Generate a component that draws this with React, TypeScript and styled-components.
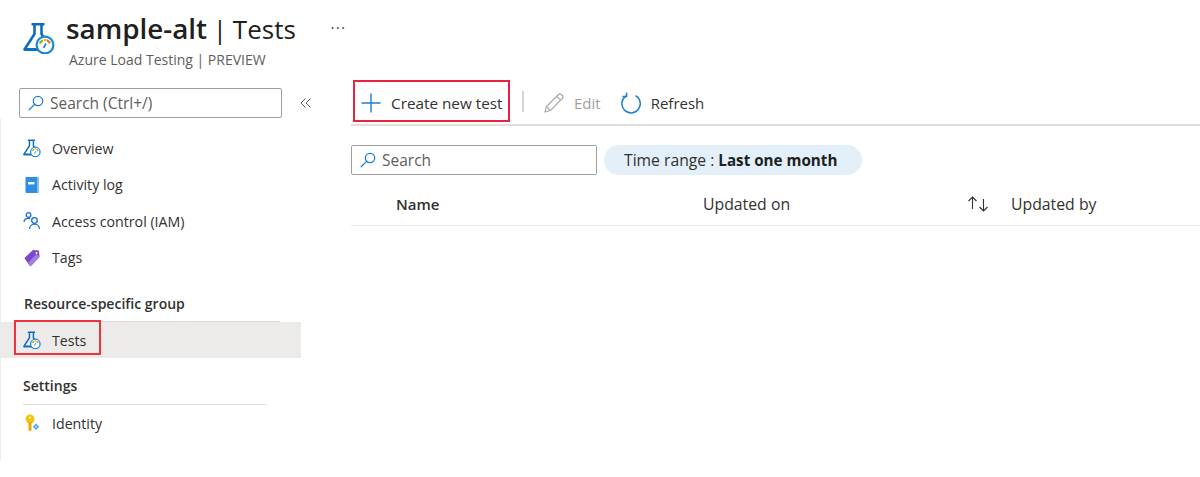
import React from 'react'
import styled, { createGlobalStyle } from 'styled-components'

const GlobalStyle = createGlobalStyle`
  html, body {
    margin: 0;
    padding: 0;
    background: #fff;
  }
  body {
    font-family: "Open Sans", "Noto Sans", "Liberation Sans", sans-serif;
    color: #323130;
  }
`

const Page = styled.div`
  width: 1200px;
  height: 477px;
  overflow: hidden;
  display: flex;
  flex-direction: column;
`
const Header = styled.header`
  display: flex;
  align-items: flex-start;
  padding: 12px 0 0 23px;
  height: 76px;
  box-sizing: border-box;
  > svg {
    margin-top: 10px;
  }
`
const HeaderText = styled.div`
  margin-left: 11px;
  display: flex;
  flex-direction: column;
`
const TitleRow = styled.div`
  display: flex;
  align-items: flex-start;
`
const Title = styled.h1`
  margin: -1px 0 0;
  font-size: 26px;
  line-height: 34px;
  font-weight: 400;
  color: #201f1e;
  white-space: nowrap;
  word-spacing: -1px;
  b {
    font-size: 27.8px;
    font-weight: 600;
  }
`
const More = styled.span`
  margin-left: 35px;
  font-size: 14px;
  line-height: 32px;
  letter-spacing: 1.5px;
`
const Subtitle = styled.div`
  margin: 5px 0 0 3px;
  font-size: 14px;
  line-height: 18px;
  color: #605e5c;
`
const Body = styled.div`
  display: flex;
  flex: 1;
  min-height: 0;
`
const Sidebar = styled.aside`
  width: 301px;
  flex: none;
  height: 373px;
`
const SideSearchRow = styled.div`
  display: flex;
  align-items: center;
  padding: 12px 0 0 19px;
  height: 30px;
`
const Collapse = styled.span`
  margin-left: 18px;
  width: 12px;
  display: flex;
`
const SearchBox = styled.div<{ width: number }>`
  width: ${({ width }) => width}px;
  height: 30px;
  box-sizing: border-box;
  flex: none;
  border: 1px solid #a19f9d;
  border-radius: 2px;
  display: flex;
  align-items: center;
  gap: 6px;
  padding-left: 8px;
  font-size: 15.5px;
  color: #605e5c;
`
const SideNav = styled.nav`
  margin-top: 1px;
  border-left: 1px solid #edebe9;
  height: 341px;
  display: flex;
  flex-direction: column;
`
const NavList = styled.div`
  padding-top: 11px;
  display: flex;
  flex-direction: column;
`
const NavItem = styled.div<{ active?: boolean }>`
  height: ${({ active }) => (active ? 36 : 36.5)}px;
  display: flex;
  align-items: center;
  gap: 11px;
  padding-left: 22px;
  font-size: 14.2px;
  background: ${({ active }) => (active ? '#edebe9' : 'transparent')};
  position: relative;
`
const IconSlot = styled.span`
  width: 18px;
  height: 18px;
  flex: none;
  display: flex;
`
const Highlight = styled.span`
  position: absolute;
  left: 13px;
  top: -2px;
  width: 87px;
  height: 35px;
  border: 2px solid #f0343f;
  box-sizing: border-box;
`
const GroupTitle = styled.div<{ rule: number }>`
  margin: 18px 0 0 ${({ rule }) => (rule === 243 ? '22px' : '23px')};
  width: ${({ rule }) => rule}px;
  height: ${({ rule }) => (rule === 243 ? '28px' : '27px')};
  line-height: 20px;
  font-size: 14px;
  font-weight: 600;
  color: #323130;
  border-bottom: 1px solid #dcdbd9;
`
const Main = styled.main`
  flex: 1;
  margin-left: 50px;
  min-width: 0;
  display: flex;
  flex-direction: column;
`
const Toolbar = styled.div`
  height: 46px;
  margin-top: 4px;
  box-sizing: border-box;
  border-bottom: 2px solid #e1dfdd;
  display: flex;
  align-items: flex-start;
  padding-left: 2px;
`
const ToolButton = styled.div<{ disabled?: boolean }>`
  display: flex;
  align-items: center;
  gap: 10px;
  height: 42px;
  box-sizing: border-box;
  padding-top: 3px;
  font-size: 15px;
  color: ${({ disabled }) => (disabled ? '#a19f9d' : '#323130')};
  padding-left: 20px;
`
const PrimaryButton = styled(ToolButton)`
  width: 157px;
  padding-left: 6px;
  padding-top: 3px;
  font-size: 15.3px;
  border: 2px solid #e8233f;
  white-space: nowrap;
`
const ToolDivider = styled.span`
  width: 2px;
  height: 21px;
  margin: 11px 0 0 12px;
  background: #d6d5d3;
`
const FilterRow = styled.div`
  display: flex;
  gap: 7px;
  margin-top: 19px;
`
const Pill = styled.div`
  width: 258px;
  height: 30px;
  box-sizing: border-box;
  border-radius: 15px;
  background: #e3f0fa;
  display: flex;
  align-items: center;
  padding-left: 20px;
  font-size: 15.7px;
  white-space: pre;
  b {
    font-size: 15.2px;
    font-weight: 700;
    color: #201f1e;
  }
`
const TableHead = styled.div`
  display: grid;
  grid-template-columns: 307px 264px 44px 1fr;
  align-items: center;
  height: 51px;
  box-sizing: border-box;
  padding: 7px 0 0 45px;
  border-bottom: 1px solid #edebe9;
  font-size: 15.8px;
`
const Column = styled.span<{ strong?: boolean }>`
  font-weight: ${({ strong }) => (strong ? 600 : 400)};
  font-size: ${({ strong }) => (strong ? '15px' : 'inherit')};
`
const SortIcon = styled.span`
  display: flex;
`

const Flask = ({ size }: { size: number }) => (
  <svg width={size} height={size} viewBox="0 0 32 32">
    <rect x="8.500" y="1" width="13" height="2.600" rx="0.600" fill="#0f6cbd" />
    <path d="M11.500 3v9L1.500 27.500h15M18.500 3v9l3 5" fill="none" stroke="#0f6cbd" strokeWidth="2.600" strokeLinejoin="round" />
    <path d="M1.500 27.500h15" stroke="#0f6cbd" strokeWidth="2.800" />
    <circle cx="22" cy="23" r="8.400" fill="#fff" stroke="#1a86d8" strokeWidth="2.200" />
    <path d="M16.800 21.500a5.600 5.600 0 0 1 3-3.100" fill="none" stroke="#7fba00" strokeWidth="2.200" />
    <path d="M20.800 18a5.600 5.600 0 0 1 2.600 0" fill="none" stroke="#f2b90f" strokeWidth="2.200" />
    <path d="M23.800 18.200a5.600 5.600 0 0 1 3.200 3.200" fill="none" stroke="#e8702a" strokeWidth="2.200" />
    <path d="M20.500 26l2.500-4.500" stroke="#1a86d8" strokeWidth="1.600" />
  </svg>
)

const Magnifier = () => (
  <svg width="16" height="16" viewBox="0 0 16 16" fill="none" stroke="#1f7fd1" strokeWidth="1.300">
    <circle cx="10" cy="6" r="4.700" />
    <path d="M6.600 9.400L1.200 14.800" strokeLinecap="round" />
  </svg>
)

const Chevrons = () => (
  <svg width="12" height="12" viewBox="0 0 12 12" fill="none" stroke="#605e5c" strokeWidth="1">
    <path d="M5.500 1.500L1 6l4.500 4.500M10.500 1.500L6 6l4.500 4.500" />
  </svg>
)

const BookIcon = () => (
  <svg width="18" height="18" viewBox="0 0 18 18">
    <path d="M2.500 1h13v16H3.500a1 1 0 0 1-1-1z" fill="#2b8fe3" />
    <rect x="14" y="1" width="1.500" height="16" fill="#7fbdf0" />
    <rect x="5" y="6" width="6.500" height="2.400" fill="#fff" />
  </svg>
)

const PeopleIcon = () => (
  <svg width="18" height="18" viewBox="0 0 18 18" fill="none" stroke="#1a6fd0" strokeWidth="1.300">
    <circle cx="5.500" cy="3" r="2.300" />
    <path d="M1 10c.3-2.200 1.800-3.600 3.800-3.600h2.400" />
    <circle cx="11.500" cy="8.500" r="2.800" />
    <path d="M6.500 17c.2-2.800 2.400-4.800 5-4.800s4.800 2 5 4.800" />
  </svg>
)

const TagIcon = () => (
  <svg width="18" height="18" viewBox="0 0 18 18">
    <path d="M2 8.500L10 1l6 .5.500 6.500-8.300 8.800a1 1 0 0 1-1.400 0L2 10a1 1 0 0 1 0-1.500z" fill="#7b48c9" />
    <path d="M5.500 13.500L13.500 5l3 3-8.300 8.800a1 1 0 0 1-1.400 0z" fill="#a47fdd" />
    <circle cx="13.500" cy="4" r="1" fill="#fff" />
  </svg>
)

const KeyIcon = () => (
  <svg width="18" height="18" viewBox="0 0 18 18">
    <circle cx="7" cy="5" r="4.500" fill="#f6c40e" />
    <circle cx="7" cy="3.500" r="1.100" fill="#fff3b8" />
    <path d="M5.500 8h3v8L7 17.500 5.500 16z" fill="#e8ab05" />
    <path d="M13 9.500l3.200 3.200L13 16l-3.200-3.300z" fill="#4aa8e0" />
    <circle cx="13" cy="12.700" r="1" fill="#cfe8f8" />
  </svg>
)

const PlusIcon = () => (
  <svg width="20" height="20" viewBox="0 0 20 20" stroke="#1f7fd1" strokeWidth="1.400">
    <path d="M10 .5v19M.5 10h19" />
  </svg>
)

const PencilIcon = () => (
  <svg width="20" height="20" viewBox="0 0 20 20" fill="none" stroke="#a9a8a6" strokeWidth="1.200">
    <path d="M1 19l1.400-5.500L14.500 1.500a2 2 0 0 1 2.800 0l1 1a2 2 0 0 1 0 2.800L6.500 17.500z" />
    <path d="M12.800 3.300l4 4M2.400 13.500l4.100 4" />
  </svg>
)

const RefreshIcon = () => (
  <svg width="20" height="22" viewBox="0 0 20 22" fill="none" stroke="#1f7fd1" strokeWidth="1.500">
    <path d="M5.200 3.900a9.200 9.200 0 1 0 9.400-.2" />
    <path d="M5.600.5v4H1.500" />
  </svg>
)

const SortArrows = () => (
  <svg width="22" height="16" viewBox="0 0 22 16" fill="none" stroke="#323130" strokeWidth="1.100">
    <path d="M5.500 13V1M1.500 5l4-4 4 4" />
    <path d="M16.500 3v12M12.500 11l4 4 4-4" />
  </svg>
)

const navItems = [
  { label: 'Overview', icon: <Flask size={18} /> },
  { label: 'Activity log', icon: <BookIcon /> },
  { label: 'Access control (IAM)', icon: <PeopleIcon /> },
  { label: 'Tags', icon: <TagIcon /> },
]

export default function App() {
  return (
    <Page>
      <GlobalStyle />
      <Header>
        <Flask size={32} />
        <HeaderText>
          <TitleRow>
            <Title>
              <b>sample-alt</b> | Tests
            </Title>
            <More>···</More>
          </TitleRow>
          <Subtitle>Azure Load Testing | PREVIEW</Subtitle>
        </HeaderText>
      </Header>
      <Body>
        <Sidebar>
          <SideSearchRow>
            <SearchBox width={263}>
              <Magnifier />
              Search (Ctrl+/)
            </SearchBox>
            <Collapse>
              <Chevrons />
            </Collapse>
          </SideSearchRow>
          <SideNav>
            <NavList>
              {navItems.map((item) => (
                <NavItem key={item.label}>
                  <IconSlot>{item.icon}</IconSlot>
                  {item.label}
                </NavItem>
              ))}
            </NavList>
            <GroupTitle rule={256}>Resource-specific group</GroupTitle>
            <NavItem active>
              <Highlight />
              <IconSlot>
                <Flask size={18} />
              </IconSlot>
              Tests
            </NavItem>
            <GroupTitle rule={243}>Settings</GroupTitle>
            <NavItem>
              <IconSlot>
                <KeyIcon />
              </IconSlot>
              Identity
            </NavItem>
          </SideNav>
        </Sidebar>
        <Main>
          <Toolbar>
            <PrimaryButton>
              <PlusIcon />
              Create new test
            </PrimaryButton>
            <ToolDivider />
            <ToolButton disabled>
              <PencilIcon />
              Edit
            </ToolButton>
            <ToolButton>
              <RefreshIcon />
              Refresh
            </ToolButton>
          </Toolbar>
          <FilterRow>
            <SearchBox width={246}>
              <Magnifier />
              Search
            </SearchBox>
            <Pill>
              Time range : <b>Last one month</b>
            </Pill>
          </FilterRow>
          <TableHead>
            <Column strong>Name</Column>
            <Column>Updated on</Column>
            <SortIcon>
              <SortArrows />
            </SortIcon>
            <Column>Updated by</Column>
          </TableHead>
        </Main>
      </Body>
    </Page>
  )
}
